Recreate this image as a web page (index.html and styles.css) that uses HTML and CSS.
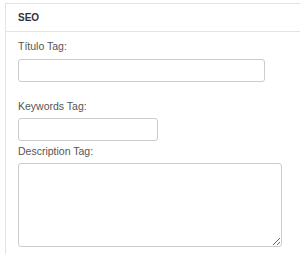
FILE: index.html
```html
<!DOCTYPE html>
<html lang="en">
<head>
    <meta charset="UTF-8">
    <meta name="viewport" content="width=device-width, initial-scale=1.0">
    <title>SEO</title>
    <link rel="stylesheet" href="styles.css">
</head>
<body>
    <div class="panel">
        <div class="panel-heading">SEO</div>
        <div class="panel-body">
            <div class="form-group">
                <label for="tituloTag">Título Tag:</label>
                <input type="text" id="tituloTag" class="input-wide">
            </div>

            <div class="form-group tight">
                <label for="keywordsTag">Keywords Tag:</label>
                <input type="text" id="keywordsTag" class="input-short">
            </div>

            <div class="form-group last">
                <label for="descriptionTag">Description Tag:</label>
                <textarea id="descriptionTag"></textarea>
            </div>
        </div>
    </div>
</body>
</html>
```

FILE: styles.css
```css
body {
    font-family: "Liberation Sans", Arial, sans-serif;
    margin: 0;
    padding: 0;
    background: #fff;
}
.panel {
    margin: 3px 0 0 5px;
    border: 1px solid #e3e3e3;
    border-right: none;
    border-bottom: none;
}
.panel-heading {
    height: 27px;
    line-height: 27px;
    padding-left: 12px;
    font-size: 10px;
    font-weight: bold;
    color: #333;
    border-bottom: 1px solid #e3e3e3;
}
.panel-body {
    padding: 8px 12px 7px;
}
label {
    display: block;
    font-size: 10.5px;
    line-height: 13px;
    color: #555;
    margin-bottom: 5px;
}
.form-group:first-child label {
    margin-bottom: 6px;
}
.form-group {
    margin-bottom: 18px;
}
.form-group.tight {
    margin-bottom: 4px;
}
.form-group.last {
    margin-bottom: 0;
}
input,
textarea {
    display: block;
    box-sizing: border-box;
    border: 1px solid #ccc;
    border-radius: 3px;
    background: #fff;
    outline: none;
    margin: 0;
    padding: 4px 6px;
    font-family: inherit;
}
input {
    height: 23px;
}
.input-wide {
    width: 247px;
}
.input-short {
    width: 140px;
}
textarea {
    width: 264px;
    height: 84px;
}
```
